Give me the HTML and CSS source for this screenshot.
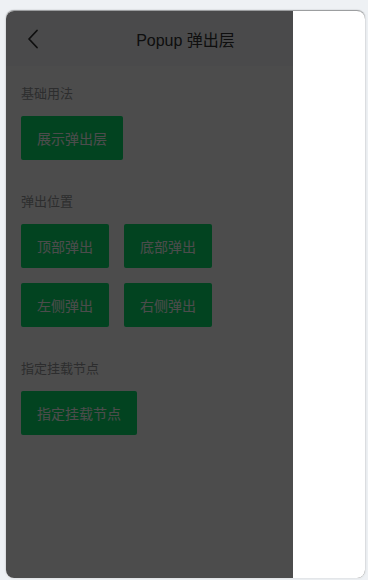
FILE: index.html
```html
<!DOCTYPE html>
<html lang="zh-CN">
<head>
<meta charset="utf-8">
<title>Popup 弹出层</title>
<link rel="stylesheet" href="styles.css">
</head>
<body>
<div class="device">
  <div class="page">
    <header class="nav-bar">
      <span class="nav-back">
        <svg width="12" height="20" viewBox="0 0 12 20"><path d="M10 1.5 L2 10 L10 18.5" fill="none" stroke="#323233" stroke-width="1.8" stroke-linecap="round" stroke-linejoin="round"/></svg>
      </span>
      <h1 class="nav-title">Popup 弹出层</h1>
    </header>

    <section class="demo-block first">
      <h2 class="demo-title">基础用法</h2>
      <div class="btn-row">
        <button class="btn">展示弹出层</button>
      </div>
    </section>

    <section class="demo-block">
      <h2 class="demo-title">弹出位置</h2>
      <div class="btn-row">
        <button class="btn">顶部弹出</button>
        <button class="btn">底部弹出</button>
      </div>
      <div class="btn-row">
        <button class="btn">左侧弹出</button>
        <button class="btn">右侧弹出</button>
      </div>
    </section>

    <section class="demo-block">
      <h2 class="demo-title">指定挂载节点</h2>
      <div class="btn-row">
        <button class="btn">指定挂载节点</button>
      </div>
    </section>
  </div>
  <div class="overlay"></div>
  <div class="popup popup-right"></div>
</div>
</body>
</html>
```

FILE: styles.css
```css
html, body {
  margin: 0;
  height: 100%;
}
body {
  background: #eef1f4;
  padding: 11px 3px 2px 6px;
  box-sizing: border-box;
  font-family: "Liberation Sans", "Noto Sans CJK SC", sans-serif;
}
.device {
  position: relative;
  height: 100%;
  border-radius: 8px;
  overflow: hidden;
  background: #fff;
  box-shadow: 0 -1px 1px rgba(0,0,0,0.35), 0 0 3px rgba(0,0,0,0.12);
}
.page {
  height: 100%;
  background: #fff;
}
.nav-bar {
  position: relative;
  height: 55px;
  display: flex;
  align-items: center;
  justify-content: center;
  background: #f7f8fa;
}
.nav-back {
  position: absolute;
  left: 21px;
  top: 18px;
  display: flex;
}
.nav-title {
  margin: 0;
  font-size: 16px;
  font-weight: normal;
  color: #323233;
}
.demo-block {
  padding: 34px 15px 0 15px;
}
.demo-block.first {
  padding-top: 20px;
}
.demo-title {
  margin: 0 0 14px 0;
  font-size: 13px;
  line-height: 16px;
  font-weight: normal;
  color: #969799;
}
.btn-row {
  display: flex;
  gap: 15px;
  margin-bottom: 15px;
}
.btn-row:last-child {
  margin-bottom: 0;
}
.btn {
  height: 44px;
  padding: 0 16px;
  border: 0;
  border-radius: 2px;
  background: #07e06d;
  color: #fff;
  font-family: "Liberation Sans", "Noto Sans CJK SC", sans-serif;
  font-size: 14px;
  margin: 0;
}
.overlay {
  position: absolute;
  inset: 0;
  background: rgba(0,0,0,0.7);
}
.popup {
  position: absolute;
  background: #fff;
}
.popup-right {
  top: 0;
  right: 0;
  bottom: 0;
  width: 20%;
}
```
